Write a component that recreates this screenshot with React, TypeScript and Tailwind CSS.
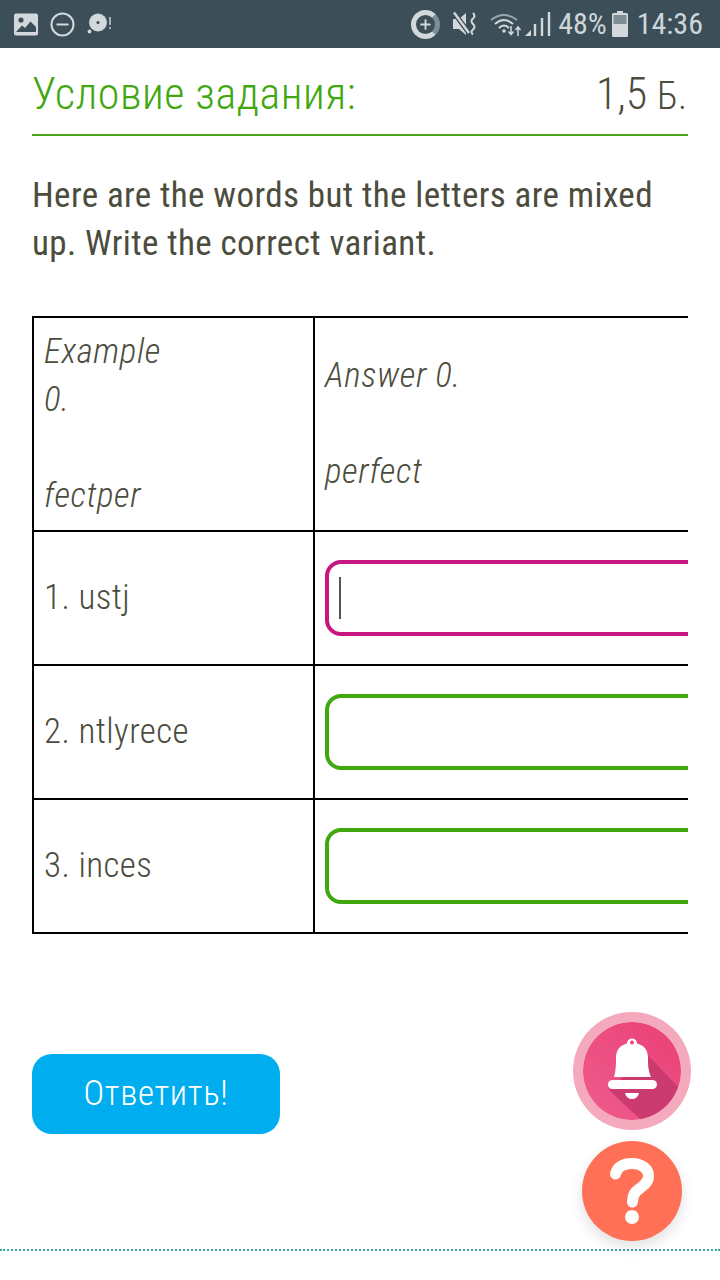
import { Plus } from 'lucide-react'

function StatusBar() {
  return (
    <div className="h-12 bg-[#3c4f58] flex items-center justify-between pl-[14px] pr-[17px] text-[#cfd6da] font-['Roboto',sans-serif]">
      <div className="flex items-center gap-[12px]">
        <svg width="24" height="23" viewBox="0 0 24 23">
          <rect width="24" height="22" y="0.5" rx="2" fill="#d3d8dc" />
          <circle cx="7" cy="7" r="2.6" fill="#3c4f58" />
          <path d="M2 19 L8 12.5 L11 15 L16.5 8.5 L22 14 V19 Z" fill="#3c4f58" />
        </svg>
        <svg width="25" height="25" viewBox="0 0 25 25" fill="none" stroke="#d3d8dc" strokeWidth="2">
          <circle cx="12.5" cy="12.5" r="11" />
          <path d="M6.5 12.5 H18.5" />
        </svg>
        <svg width="26" height="24" viewBox="0 0 26 24" className="-ml-[1px]">
          <circle cx="12" cy="10.5" r="9" fill="#d3d8dc" />
          <circle cx="12" cy="10.5" r="1.6" fill="#3c4f58" />
          <circle cx="3.5" cy="19.5" r="2.4" fill="#d3d8dc" stroke="#3c4f58" strokeWidth="1" />
          <path d="M24 5 V13 M24 15 V17" stroke="#d3d8dc" strokeWidth="1.4" />
        </svg>
      </div>
      <div className="flex items-center">
        <div className="relative w-[29px] h-[29px] rounded-full border-[5px] border-[#d3d8dc] border-r-[#7f8e95] flex items-center justify-center">
          <Plus size={15} strokeWidth={3} color="#d3d8dc" />
        </div>
        <svg width="28" height="26" viewBox="0 0 28 26" className="ml-[12px]">
          <path d="M1 8 H7 L14 2 V24 L7 18 H1 Z" fill="#d3d8dc" />
          <path d="M3 3 L17 22" stroke="#3c4f58" strokeWidth="5" />
          <path d="M2 1.5 L17 22" stroke="#d3d8dc" strokeWidth="2.4" />
          <path d="M21 2 q3 3 0 5.5 t0 5.5 t0 5.5 t0 5" stroke="#d3d8dc" strokeWidth="2" fill="none" />
        </svg>
        <svg width="65" height="26" viewBox="0 0 65 26" className="ml-[10px]" fill="none">
          <path d="M1 9 Q14 -1 27 9" stroke="#9aa7ad" strokeWidth="2" />
          <path d="M5 13 Q14 5 23 13" stroke="#d3d8dc" strokeWidth="2" />
          <path d="M9 17 Q14 12 19 17" stroke="#d3d8dc" strokeWidth="2" />
          <circle cx="14" cy="20" r="1.8" fill="#d3d8dc" />
          <path d="M21 15 V23 M18.5 20.5 L21 23.5 L23.5 20.5" stroke="#d3d8dc" strokeWidth="1.5" />
          <path d="M28 25 V16 M25.5 19 L28 16 L30.5 19" stroke="#d3d8dc" strokeWidth="1.5" />
          <path d="M35 25 L41 19 V25 Z" fill="#d3d8dc" />
          <path d="M45 25 V13 M52 25 V7 M59 25 V1" stroke="#d3d8dc" strokeWidth="2.4" />
        </svg>
        <span className="text-[30px] leading-none ml-[3px] font-stretch-[75%]">48%</span>
        <svg width="16" height="26" viewBox="0 0 16 26" className="ml-[5px]">
          <rect x="5" y="0" width="6" height="3" fill="#d3d8dc" />
          <rect x="0" y="2" width="16" height="24" rx="1.5" fill="#d3d8dc" />
          <rect x="1.5" y="4" width="13" height="9" fill="#7f8e95" />
        </svg>
        <span className="text-[30px] leading-none ml-[9px] font-stretch-[75%]">14:36</span>
      </div>
    </div>
  )
}

function AnswerBox({ active }: { active?: boolean }) {
  return (
    <div className={`h-[76px] w-[400px] rounded-[16px] border-[4px] flex items-center pl-[10px] ${active ? 'border-[#c8167f]' : 'border-[#41a70f]'}`}>
      {active && <div className="w-[2px] h-[42px] bg-[#55554a]" />}
    </div>
  )
}

function BellButton() {
  return (
    <div className="w-[118px] h-[118px] rounded-full bg-[#f5a9bd] flex items-center justify-center">
      <svg width="98" height="98" viewBox="0 0 98 98" className="rounded-full">
        <defs>
          <linearGradient id="bellBg" x1="0" y1="1" x2="1" y2="0">
            <stop offset="0" stopColor="#ee5c8c" />
            <stop offset="1" stopColor="#ea4077" />
          </linearGradient>
        </defs>
        <circle cx="49" cy="49" r="49" fill="url(#bellBg)" />
        <path d="M64 32 L95 65 A49 49 0 0 1 57 97 L26 68 Z" fill="#cc3b6f" />
        <path d="M31 55 C33 48 33 42 33 36 C33 27 38 23 44 21.5 a5 5 0 0 1 10 0 C60 23 65 27 65 36 C65 42 65 48 68 55 Z" fill="white" />
        <circle cx="49" cy="20.5" r="2" fill="#e9487c" />
        <rect x="25" y="58" width="49" height="9" rx="4.5" fill="white" />
        <path d="M42 71 H56 C55 75 52 77 49 77 C46 77 43 75 42 71 Z" fill="white" />
      </svg>
    </div>
  )
}

export default function App() {
  const rows = ['1. ustj', '2. ntlyrece', '3. inces']

  return (
    <div className="w-[720px] h-[1280px] bg-white overflow-hidden font-['Roboto',sans-serif] text-[#4c4c3e]">
      <StatusBar />

      <div className="px-[32px]">
        <div className="h-[88px] flex items-center justify-between border-b-2 border-[#4aa51c] pt-[6px]">
          <span className="text-[44px] font-light text-[#41a70f] leading-none font-stretch-[85%] tracking-[0.5px]">Условие задания:</span>
          <span className="text-[44px] font-light leading-none pr-[1px] font-stretch-[85%]">
            1,5 <span className="text-[38px]">Б.</span>
          </span>
        </div>

        <p className="mt-[36px] text-[35px] leading-[48px] font-stretch-[85%] tracking-[0.4px]">
          Here are the words but the letters are mixed up. Write the correct variant.
        </p>

        <div className="mt-[48px] w-[656px] overflow-hidden">
          <table className="border-collapse w-[760px] table-fixed text-[35px] font-light leading-[48px] font-stretch-[85%] tracking-[0.4px]">
            <tbody>
              <tr className="h-[214px] tracking-[0.6px]">
                <td className="w-[281px] border-2 border-black px-[10px] italic align-middle">
                  Example
                  <br />
                  0.
                  <br />
                  <br />
                  fectper
                </td>
                <td className="border-2 border-black px-[10px] italic align-middle">
                  Answer 0.
                  <br />
                  <br />
                  perfect
                </td>
              </tr>
              {rows.map((word, i) => (
                <tr key={word} className="h-[134px]">
                  <td className="border-2 border-black px-[10px]">{word}</td>
                  <td className="border-2 border-black px-[10px]">
                    <AnswerBox active={i === 0} />
                  </td>
                </tr>
              ))}
            </tbody>
          </table>
        </div>

        <div className="mt-[78px] flex justify-between">
          <button className="mt-[42px] w-[248px] h-[80px] rounded-[20px] bg-[#00aeef] text-white text-[35px] font-light font-stretch-[85%] tracking-[0.65px]">
            Ответить!
          </button>
          <div className="flex flex-col items-center gap-[11px] -mr-[3px]">
            <BellButton />
            <div className="w-[100px] h-[100px] rounded-full bg-[#ff7057] shadow-[0_6px_14px_rgba(0,0,0,0.12)] flex items-center justify-center">
              <svg width="44" height="66" viewBox="0 0 44 66" fill="none">
                <path d="M5.5 16 C7 9 13 5.5 22 5.5 C32 5.5 38.5 11 38.5 18 C38.5 26 31 29 26.5 33 C23.5 36 22.5 39 22.5 44" stroke="white" strokeWidth="11" strokeLinecap="round" />
                <circle cx="22" cy="59" r="7" fill="white" />
              </svg>
            </div>
          </div>
        </div>
      </div>

      <div className="mt-[8px] border-b-2 border-dotted border-[#3aa6a6]" />
    </div>
  )
}
